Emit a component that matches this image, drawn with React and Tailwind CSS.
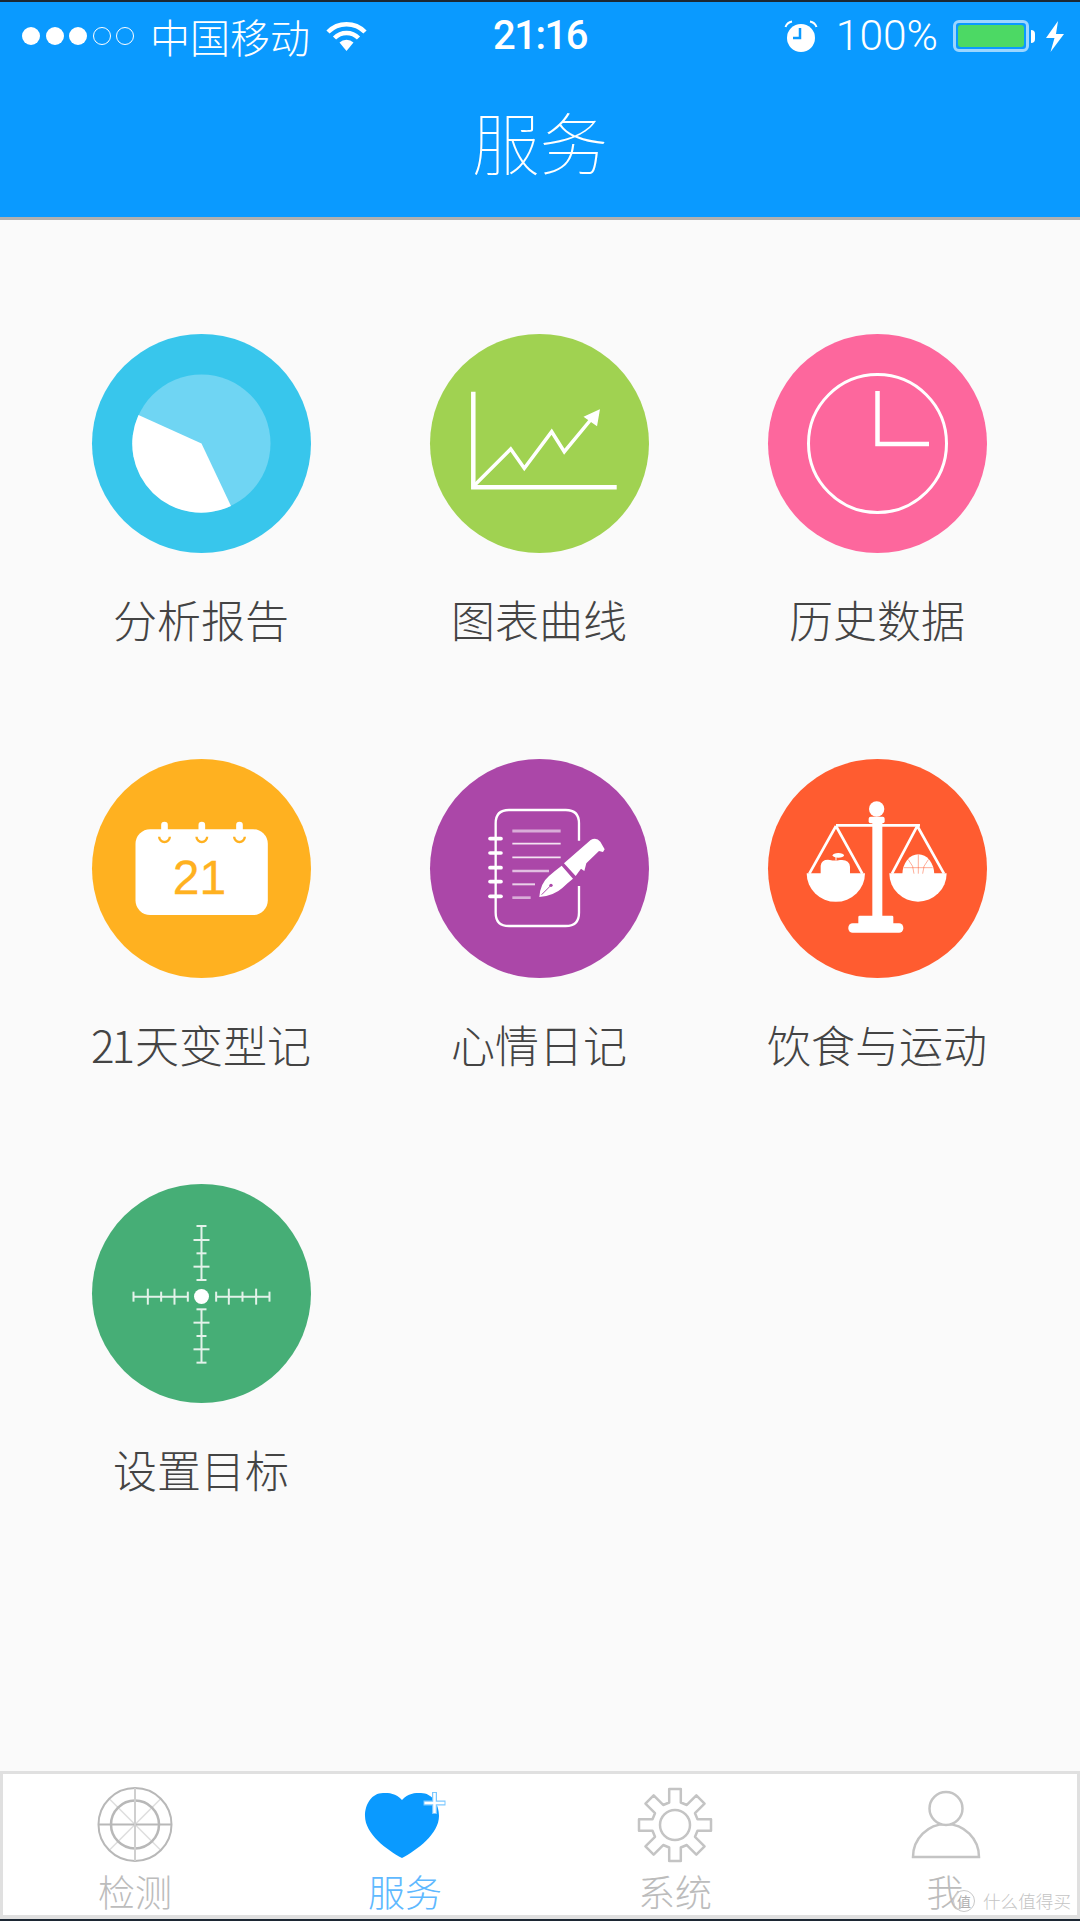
import React from "react";

const Pie = () => (
  <svg viewBox="0 0 219 219" className="w-full h-full">
    <circle cx="109.5" cy="109.5" r="69" fill="#6fd5f3" />
    <path d="M109.5 109.5 L46.5 81 A69 69 0 0 0 139 172 Z" fill="#fff" />
  </svg>
);

const Chart = () => (
  <svg viewBox="0 0 219 219" className="w-full h-full" fill="none" stroke="#fff">
    <g transform="translate(1 0)">
      <path d="M42.3 57.7 V153.3 H185.7" strokeWidth="4.5" />
      <path d="M42 152.7 L79.7 115 L93.3 134.3 L120.7 97.7 L133.3 117.7 L162 83" strokeWidth="3.5" />
      <path d="M168 76.5 L154 83 L165.5 91 Z" fill="#fff" strokeWidth="1.5" />
    </g>
  </svg>
);

const Clock = () => (
  <svg viewBox="0 0 219 219" className="w-full h-full" fill="none" stroke="#fff">
    <circle cx="109.5" cy="109.5" r="69" strokeWidth="3" />
    <path d="M109.5 57 V110 H161" strokeWidth="4.5" />
  </svg>
);

const Calendar = () => (
  <svg viewBox="0 0 219 219" className="w-full h-full">
    <g transform="translate(-22.5 -19) scale(0.3333)">
      <rect x="198" y="268" width="397" height="257" rx="44" fill="#fff" />
      {[285, 397, 510].map((x) => (
        <g key={x}>
          <path d={`M${x - 16} 290 A16 16 0 0 0 ${x + 16} 290`} fill="#fff" stroke="#ffb120" strokeWidth="7" />
          <rect x={x - 10} y="245" width="20" height="56" rx="10" fill="#fff" />
        </g>
      ))}
    </g>
    <text x="107.5" y="134.5" textAnchor="middle" fontSize="48" fill="#ffb120" stroke="#ffb120" strokeWidth="0.3" fontFamily="'Liberation Sans', sans-serif">21</text>
  </svg>
);

const Notebook = () => (
  <svg viewBox="0 0 219 219" className="w-full h-full" fill="none" stroke="#fff">
    <g transform="translate(49 41) scale(0.3333)">
      <path d="M300 122 V70 Q300 30 260 30 H90 Q50 30 50 70 V338 Q50 378 90 378 H260 Q300 378 300 338 V258" strokeWidth="7" />
      {[116, 159, 203, 245, 289].map((y) => (
        <path key={y} d={`M33 ${y} H66`} strokeWidth="11" strokeLinecap="round" />
      ))}
      <path d="M100 93 H245" strokeWidth="9" opacity="0.55" />
      <path d="M100 131 H245" strokeWidth="5" opacity="0.85" />
      <path d="M100 172 H245" strokeWidth="5" opacity="0.85" />
      <path d="M100 213 H210" strokeWidth="7" opacity="0.65" />
      <path d="M100 253 H168" strokeWidth="6" opacity="0.75" />
      <path d="M100 293 H155" strokeWidth="8" opacity="0.55" />
      <path
        d="M255 190 L335 120 Q352 110 364 125 L377 148 L372 156 L360 153 L322 190 L316 213 L306 206 L290 228 Z"
        fill="#fff"
        stroke="none"
      />
      <path
        d="M248 197 L282 236 Q264 250 250 264 Q225 287 181 291 Q184 250 210 228 Q228 212 248 197 Z"
        fill="#fff"
        stroke="none"
      />
      <path d="M188 284 L214 258" stroke="#ab47a8" strokeWidth="3" />
      <circle cx="216" cy="256" r="5" fill="#ab47a8" stroke="none" />
    </g>
  </svg>
);

const Scale = () => (
  <svg viewBox="0 0 219 219" className="w-full h-full" fill="none" stroke="#fff">
    <g transform="translate(32 36) scale(0.3333)">
      <circle cx="230" cy="42" r="23" fill="#fff" stroke="none" />
      <rect x="206" y="65" width="48" height="20" rx="6" fill="#fff" stroke="none" />
      <rect x="217" y="80" width="30" height="290" fill="#fff" stroke="none" />
      <path d="M108 91 H360" strokeWidth="8" />
      <rect x="175" y="362" width="105" height="30" rx="4" fill="#fff" stroke="none" />
      <rect x="145" y="385" width="165" height="28" rx="13" fill="#fff" stroke="none" />
      <path d="M108 93 L28 236 M108 93 L187 236" strokeWidth="8" />
      <path d="M352 93 L276 236 M352 93 L432 236" strokeWidth="8" />
      <path d="M20 235 H195 A87 85 0 0 1 20 235 Z" fill="#fff" stroke="none" />
      <path d="M268 235 H440 A86 85 0 0 1 268 235 Z" fill="#fff" stroke="none" />
      <path d="M62 238 L62 212 Q65 192 90 195 Q105 198 120 195 Q148 192 150 215 L150 238 Z" fill="#fff" stroke="none" />
      <ellipse cx="115" cy="181" rx="17" ry="7" fill="#fff" stroke="none" />
      <path d="M108 182 V196" strokeWidth="3" />
      <path d="M307 238 A48 60 0 0 1 403 238 Z" fill="#fff" stroke="none" />
      <path d="M355 178 V236 M325 194 Q342 212 342 236 M385 194 Q368 212 368 236 M312 218 H398" stroke="#ff5c30" strokeWidth="2" opacity="0.75" />
    </g>
  </svg>
);

const Target = () => {
  const ticks = (vals, horizontal) =>
    vals.map((v, i) => {
      const hw = i % 2 === 1 ? 24 : 15;
      return horizontal ? (
        <path key={v} d={`M${v} ${377 - hw} V${377 + hw}`} />
      ) : (
        <path key={v} d={`M${396 - hw} ${v} H${396 + hw}`} />
      );
    });
  return (
    <svg viewBox="0 0 219 219" className="w-full h-full" fill="none" stroke="#fff">
      <g transform="translate(-22.5 -13) scale(0.3333)" strokeWidth="6" opacity="0.85">
        <path d="M396 165 V327 M396 415 V575 M192 377 H355 M440 377 H600" />
        {ticks([165, 207, 247, 287, 327], false)}
        {ticks([415, 455, 495, 535, 575], false)}
        {ticks([192, 235, 275, 315, 355], true)}
        {ticks([440, 478, 519, 560, 600], true)}
      </g>
      <circle cx="109.5" cy="112.5" r="7.5" fill="#fff" stroke="none" />
    </svg>
  );
};

const services = [
  { label: "分析报告", bg: "bg-[#38c6ec]", Icon: Pie },
  { label: "图表曲线", bg: "bg-[#a0d251]", Icon: Chart },
  { label: "历史数据", bg: "bg-[#fd679d]", Icon: Clock },
  {
    label: (
      <>
        <span className="tracking-[-3px]">21</span>
        <span className="ml-[3px]">天变型记</span>
      </>
    ),
    bg: "bg-[#ffb120]",
    Icon: Calendar,
  },
  { label: "心情日记", bg: "bg-[#ab47a8]", Icon: Notebook },
  { label: "饮食与运动", bg: "bg-[#ff5c30]", Icon: Scale },
  { label: "设置目标", bg: "bg-[#46ae76]", Icon: Target },
];

const Radar = () => (
  <svg viewBox="0 0 80 80" className="w-[80px] h-[80px]" fill="none">
    <path d="M14.5 15 L65.5 66 M65.5 15 L14.5 66" stroke="#dedede" strokeWidth="1.5" />
    <circle cx="40" cy="40.5" r="36.5" stroke="#b8b8b8" strokeWidth="2" />
    <circle cx="40" cy="40.5" r="24" stroke="#b8b8b8" strokeWidth="2.5" />
    <path d="M3.5 40.5 H76.5" stroke="#b8b8b8" strokeWidth="2" />
    <path d="M40 4 V77" stroke="#cfcfcf" strokeWidth="2" />
  </svg>
);

const Heart = () => (
  <svg viewBox="0 0 80 80" className="w-[80px] h-[80px] overflow-visible" fill="none">
    <path
      d="M37 16 C31 9 24 9 18 9 C7 9 0 20 0 32 C0 50 22 66 37 74 C52 66 74 50 74 32 C74 20 67 9 56 9 C50 9 43 9 37 16 Z"
      fill="#0a9aff"
    />
    <path d="M69.5 8 V30 M58.5 19 H80.5" stroke="#7cc8ff" strokeWidth="5" />
    <path d="M69.5 9 V29 M59.5 19 H79.5" stroke="#fff" strokeWidth="2.5" />
  </svg>
);

const gearPath = (() => {
  const cx = 40, cy = 41, R = 36, w = 5.8, root = 22.5;
  let d = "";
  for (let i = 0; i < 8; i++) {
    const a = (i * Math.PI) / 4 - Math.PI / 2;
    const c = Math.cos(a), s = Math.sin(a);
    const pt = (r, t) => `${(cx + r * c - t * s).toFixed(2)} ${(cy + r * s + t * c).toFixed(2)}`;
    d += `${i === 0 ? "M" : "L"}${pt(root, -w)} L${pt(R, -w)} L${pt(R, w)} L${pt(root, w)} `;
  }
  return d + "Z";
})();

const Gear = () => (
  <svg viewBox="0 0 80 80" className="w-[80px] h-[80px]" fill="none" stroke="#c4c4c4">
    <path d={gearPath} strokeWidth="2.5" strokeLinejoin="round" />
    <circle cx="40" cy="41" r="15" strokeWidth="2.5" />
  </svg>
);

const Person = () => (
  <svg viewBox="0 0 80 80" className="w-[80px] h-[80px]" fill="none" stroke="#c4c4c4" strokeWidth="2.5">
    <path d="M8 73 A33 33 0 0 1 74 73 Z" />
    <circle cx="41" cy="24.5" r="16.5" fill="#fff" />
  </svg>
);

const tabs = [
  { label: "检测", Icon: Radar, color: "text-[#bcbcbc]" },
  { label: "服务", Icon: Heart, color: "text-[#5fb9ff]" },
  { label: "系统", Icon: Gear, color: "text-[#bcbcbc]" },
  { label: "我", Icon: Person, color: "text-[#bcbcbc]" },
];

const Wifi = () => (
  <svg viewBox="0 0 41 30" className="w-[41px] h-[30px]" fill="none" stroke="#fff">
    <path d="M2 11 A26 26 0 0 1 39 11" strokeWidth="4.5" />
    <path d="M8.5 17 A17 17 0 0 1 32.5 17" strokeWidth="4.5" />
    <path d="M20.5 30 L13.5 21.5 A10 10 0 0 1 27.5 21.5 Z" fill="#fff" stroke="none" />
  </svg>
);

const Alarm = () => (
  <svg viewBox="0 0 34 32" className="w-[34px] h-[32px]" fill="none">
    <circle cx="17" cy="18" r="14" fill="#fff" />
    <path d="M16 8 V18 H9" stroke="#0a9aff" strokeWidth="2.5" />
    <path d="M1.5 7 Q3 2.5 8 1.5 M32.5 7 Q31 2.5 26 1.5" stroke="#fff" strokeWidth="2" />
  </svg>
);

const Bolt = () => (
  <svg viewBox="0 0 18 31" className="w-[18px] h-[31px]">
    <path d="M12 0 L0 17 L8.5 17 L4.5 31 L18 13 L10 13 Z" fill="#fff" />
  </svg>
);

export default function App() {
  return (
    <div className="w-[1080px] h-[1921px] flex flex-col bg-[#fafafa] overflow-hidden font-['Noto_Sans_CJK_SC','Noto_Sans',sans-serif]">
      <header className="h-[220px] shrink-0 bg-[#0a9aff] border-t-[2px] border-t-[#1c2733] border-b-[3px] border-b-[#b0b0b0] text-white">
        <div className="flex items-center h-[40px] mt-[14px]">
          <div className="w-[493px] pl-[22px] flex items-center">
            <div className="flex gap-[5.5px]">
              <span className="w-[18px] h-[18px] rounded-full bg-white" />
              <span className="w-[18px] h-[18px] rounded-full bg-white" />
              <span className="w-[18px] h-[18px] rounded-full bg-white" />
              <span className="w-[18px] h-[18px] rounded-full border border-white" />
              <span className="w-[18px] h-[18px] rounded-full border border-white" />
            </div>
            <span className="ml-[16px] text-[40px] leading-[40px] font-light">中国移动</span>
            <span className="ml-[16px]"><Wifi /></span>
          </div>
          <span className="w-[92px] text-[40px] leading-[40px] font-medium tracking-[-1.5px] text-center whitespace-nowrap font-['Roboto','Liberation_Sans',sans-serif]">21:16</span>
          <div className="flex-1 flex items-center justify-end pr-[16px]">
            <Alarm />
            <span className="ml-[18px] text-[42.5px] leading-[40px] font-light font-['Roboto','Liberation_Sans',sans-serif]">100%</span>
            <div className="ml-[15px] w-[76px] h-[32px] rounded-[6px] border-[3px] border-[#9cd6ff] p-[2px]">
              <div className="w-full h-full rounded-[3px] bg-[#4cd964]" />
            </div>
            <span className="ml-[2px] w-[4px] h-[13px] rounded-r-full bg-white" />
            <span className="ml-[11px]"><Bolt /></span>
          </div>
        </div>
        <h1 className="mt-[50px] text-center text-[68px] leading-[70px] font-thin">服务</h1>
      </header>

      <main className="flex-1 pt-[114px]">
        <div className="ml-[32px] grid grid-cols-[338px_338px_338px] gap-y-[117.75px]">
          {services.map(({ label, bg, Icon }, i) => (
            <div key={i} className="flex flex-col items-center">
              <div className={`w-[219px] h-[219px] rounded-full ${bg}`}>
                <Icon />
              </div>
              <div className="mt-[44px] h-[44px] text-[44px] leading-[44px] font-light text-[#444] whitespace-nowrap">
                {label}
              </div>
            </div>
          ))}
        </div>
      </main>

      <nav className="relative h-[148px] shrink-0 bg-white border-t-[3px] border-t-[#e0e0e0] border-b-[4px] border-b-[#e0e0e0] shadow-[inset_3px_0_0_#e0e0e0,inset_-3px_0_0_#e0e0e0] pt-[10px] grid grid-cols-4">
        {tabs.map(({ label, Icon, color }) => (
          <div key={label} className="flex flex-col items-center">
            <Icon />
            <span className={`mt-[7px] text-[37px] leading-[40px] font-light ${color}`}>{label}</span>
          </div>
        ))}
        <div className="absolute right-[9px] bottom-[3px] flex items-center gap-[8px] text-[#c4c4c4]">
          <span className="w-[22px] h-[22px] rounded-full border border-[#c8c8c8] bg-white/50 flex items-center justify-center text-[14px] leading-none text-[#b0b0b0]">值</span>
          <span className="text-[17.6px] leading-[20px] font-light">什么值得买</span>
        </div>
      </nav>
      <div className="h-[2px] shrink-0 bg-[#1c2733]" />
    </div>
  );
}
